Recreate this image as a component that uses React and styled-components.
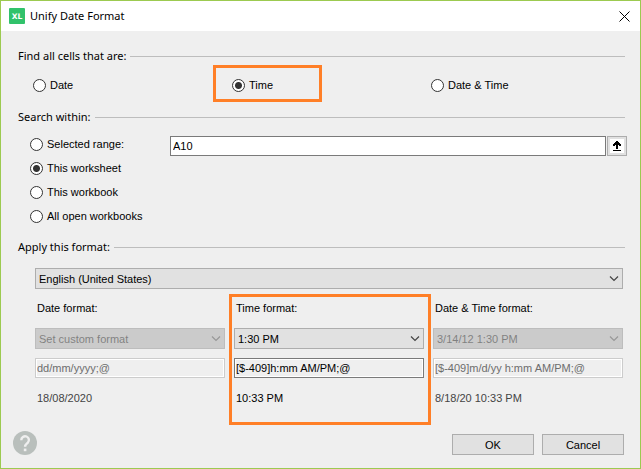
import React, { useState } from "react";
import styled, { createGlobalStyle, css } from "styled-components";

const theme = {
  frame: "#9cca50",
  face: "#efefef",
  line: "#bdbdbd",
  mark: "#ff7f27",
  sans: `"Liberation Sans", Arial, sans-serif`,
  heading: `"Noto Sans", "Open Sans", sans-serif`,
};

const GlobalStyle = createGlobalStyle`
  *, *::before, *::after {
    box-sizing: border-box;
  }
  body {
    margin: 0;
    font: 11px/16px ${theme.sans};
    color: #000;
  }
  button, input, select {
    font: inherit;
    color: inherit;
    margin: 0;
  }
`;

const Dialog = styled.form`
  display: flex;
  flex-direction: column;
  min-height: 100vh;
  border: 1px solid ${theme.frame};
  background: ${theme.face};
`;

const TitleBar = styled.header`
  display: flex;
  align-items: center;
  gap: 5px;
  height: 30px;
  padding: 0 8px;
  background: #fff;
`;

const Title = styled.h1`
  flex: 1;
  margin: 0;
  font: 11px/16px ${theme.heading};
`;

const CloseButton = styled.button`
  display: flex;
  padding: 2px;
  border: 0;
  background: none;
`;

const Content = styled.main`
  flex: 1;
  display: flex;
  flex-direction: column;
  padding-top: 17px;
`;

const GroupTitle = styled.h2`
  display: flex;
  align-items: center;
  gap: 4px;
  margin: 0 15px 0 17px;
  font: 11px/16px ${theme.heading};

  &::after {
    content: "";
    flex: 1;
    height: 1px;
    background: ${theme.line};
  }
`;

const Columns = styled.div`
  display: grid;
  grid-template-columns: repeat(3, minmax(0, 1fr));
  gap: 9px;
`;

const KindGroup = styled.section`
  margin-bottom: 14px;

  ${Columns} {
    padding: 11px 19px 0 32px;
  }
`;

const RadioLabel = styled.label`
  position: relative;
  display: flex;
  align-items: center;
  gap: 4px;
  height: ${({ $tall }) => ($tall ? "24px" : "20px")};

  ${({ $marked }) =>
    $marked &&
    css`
      &::after {
        content: "";
        position: absolute;
        left: -19px;
        top: -10px;
        width: 109px;
        height: 37px;
        border: 3px solid ${theme.mark};
        pointer-events: none;
      }
    `}
`;

const RadioInput = styled.input`
  appearance: none;
  width: 13px;
  height: 13px;
  border: 1px solid #333;
  border-radius: 50%;
  background: #fff;

  &:checked {
    background: radial-gradient(circle, #333 3px, #fff 4px);
  }
`;

const ScopeRow = styled.div`
  display: grid;
  grid-template-columns: 140px minmax(0, 1fr);
  padding: 7px 13px 11px 29px;
`;

const RangePicker = styled.div`
  display: flex;
  gap: 1px;
  padding-top: 4px;
`;

const RangeInput = styled.input`
  flex: 1;
  min-width: 0;
  height: 20px;
  padding: 0 2px;
  border: 1px solid #7a7a7a;
  background: #fff;
`;

const RangeButton = styled.button`
  display: flex;
  width: 20px;
  height: 20px;
  padding: 0;
  border: 1px solid #adadad;
  background: #fff;
  box-shadow: inset 0 0 0 2px #e1e1e1;
`;

const FormatArea = styled.div`
  display: flex;
  flex-direction: column;
  gap: 11px;
  padding: 13px 17px 0 34px;
`;

const SelectBox = styled.div`
  position: relative;
  opacity: ${({ $off }) => ($off ? 0.5 : 1)};

  svg {
    position: absolute;
    right: 4px;
    top: 7px;
    pointer-events: none;
  }
`;

const SelectInput = styled.select`
  display: block;
  appearance: none;
  width: 100%;
  height: 21px;
  padding: 0 20px 0 3px;
  border: 1px solid #adadad;
  border-radius: 0;
  background: #e1e1e1;

  &:disabled {
    border-color: #8d8d8d;
    background: #a9a9a9;
    color: #111;
    opacity: 1;
  }
`;

const FormatColumn = styled.div`
  position: relative;

  ${({ $marked }) =>
    $marked &&
    css`
      &::after {
        content: "";
        position: absolute;
        inset: -6px -7px -19px -5px;
        border: 3px solid ${theme.mark};
        pointer-events: none;
      }
    `}
`;

const FormatLabel = styled.label`
  display: block;
  padding: 0 2px 12px;
`;

const CodeInput = styled.input`
  display: block;
  width: 100%;
  height: 20px;
  margin: 9px 0 12px;
  padding: 0 1px;
  border: 1px solid #7a7a7a;
  background: ${theme.face};
  box-shadow: inset 0 0 0 1px #fff;

  &:disabled {
    border-color: #ccc;
    color: #6d6d6d;
  }
`;

const Sample = styled.output`
  display: block;
  padding: 0 2px;
  color: ${({ $off }) => ($off ? "#444" : "#000")};
`;

const Footer = styled.footer`
  display: flex;
  align-items: flex-end;
  gap: 8px;
  padding: 0 16px 13px 12px;
`;

const HelpButton = styled.button`
  display: flex;
  margin-right: auto;
  padding: 0;
  border: 0;
  background: none;
`;

const ActionButton = styled.button`
  width: 82px;
  height: 21px;
  padding: 0;
  border: 1px solid #adadad;
  background: #e1e1e1;
`;

const Logo = () => (
  <svg width="16" height="16" viewBox="0 0 16 16" aria-hidden="true">
    <rect width="16" height="16" rx="1" fill="#31c26b" />
    <text
      x="8"
      y="10.5"
      textAnchor="middle"
      fill="#fff"
      fontFamily="DejaVu Sans"
      fontSize="7.5"
      fontWeight="700"
    >
      XL
    </text>
  </svg>
);

const Chevron = () => (
  <svg width="10" height="7" viewBox="0 0 10 7" aria-hidden="true">
    <path d="M1 1.5l4 4 4-4" fill="none" stroke="#444" strokeWidth="1.2" />
  </svg>
);

const Radio = ({ label, tall, marked, ...rest }) => (
  <RadioLabel $tall={tall} $marked={marked}>
    <RadioInput type="radio" {...rest} />
    {label}
  </RadioLabel>
);

const Select = ({ options, disabled, ...rest }) => (
  <SelectBox $off={disabled}>
    <SelectInput disabled={disabled} {...rest}>
      {options.map((option) => (
        <option key={option}>{option}</option>
      ))}
    </SelectInput>
    <Chevron />
  </SelectBox>
);

const kinds = ["Date", "Time", "Date & Time"];

const scopes = [
  "Selected range:",
  "This worksheet",
  "This workbook",
  "All open workbooks",
];

const formats = [
  {
    kind: "Date",
    preset: "Set custom format",
    code: "dd/mm/yyyy;@",
    sample: "18/08/2020",
  },
  {
    kind: "Time",
    preset: "1:30 PM",
    code: "[$-409]h:mm AM/PM;@",
    sample: "10:33 PM",
  },
  {
    kind: "Date & Time",
    preset: "3/14/12 1:30 PM",
    code: "[$-409]m/d/yy h:mm AM/PM;@",
    sample: "8/18/20 10:33 PM",
  },
];

const App = () => {
  const [kind, setKind] = useState("Time");
  const [scope, setScope] = useState("This worksheet");
  const [range, setRange] = useState("A10");

  return (
    <>
      <GlobalStyle />
      <Dialog onSubmit={(e) => e.preventDefault()}>
        <TitleBar>
          <Logo />
          <Title>Unify Date Format</Title>
          <CloseButton type="button" aria-label="Close">
            <svg width="11" height="11" viewBox="0 0 11 11">
              <path d="M.5 .5l10 10M10.5 .5l-10 10" stroke="#000" />
            </svg>
          </CloseButton>
        </TitleBar>
        <Content>
          <KindGroup role="radiogroup" aria-labelledby="kind-title">
            <GroupTitle id="kind-title">Find all cells that are:</GroupTitle>
            <Columns>
              {kinds.map((item) => (
                <Radio
                  key={item}
                  name="kind"
                  label={item}
                  checked={kind === item}
                  marked={item === "Time"}
                  onChange={() => setKind(item)}
                />
              ))}
            </Columns>
          </KindGroup>

          <section role="radiogroup" aria-labelledby="scope-title">
            <GroupTitle id="scope-title">Search within:</GroupTitle>
            <ScopeRow>
              <div>
                {scopes.map((item) => (
                  <Radio
                    key={item}
                    tall
                    name="scope"
                    label={item}
                    checked={scope === item}
                    onChange={() => setScope(item)}
                  />
                ))}
              </div>
              <RangePicker>
                <RangeInput
                  aria-label="Selected range"
                  value={range}
                  onChange={(e) => setRange(e.target.value)}
                />
                <RangeButton type="button" aria-label="Pick range">
                  <svg width="18" height="18" shapeRendering="crispEdges">
                    <path d="M9 4h1v1h1v1h1v1h1v2h-2v-1h-1v4h-2v-4h-1v1h-2v-2h1v-1h1v-1h1v-1zM5 13h8v1h-8z" />
                  </svg>
                </RangeButton>
              </RangePicker>
            </ScopeRow>
          </section>

          <section>
            <GroupTitle>Apply this format:</GroupTitle>
            <FormatArea>
              <Select
                aria-label="Language"
                options={["English (United States)"]}
              />
              <Columns>
                {formats.map((item, i) => {
                  const off = item.kind !== kind;
                  return (
                    <FormatColumn key={item.kind} $marked={item.kind === "Time"}>
                      <FormatLabel htmlFor={`preset-${i}`}>
                        {item.kind} format:
                      </FormatLabel>
                      <Select
                        id={`preset-${i}`}
                        options={[item.preset]}
                        disabled={off}
                      />
                      <CodeInput
                        aria-label={`${item.kind} format code`}
                        defaultValue={item.code}
                        readOnly
                        disabled={off}
                      />
                      <Sample $off={off}>{item.sample}</Sample>
                    </FormatColumn>
                  );
                })}
              </Columns>
            </FormatArea>
          </section>
        </Content>
        <Footer>
          <HelpButton type="button" aria-label="Help">
            <svg width="24" height="24" viewBox="0 0 24 24">
              <circle cx="12" cy="12" r="12" fill="#b9bfbc" />
              <path
                d="M8.3 9.2a3.8 3.8 0 1 1 6.4 2.6c-1.4 1.3-2.6 1.9-2.6 4"
                fill="none"
                stroke="#efefef"
                strokeWidth="2.4"
              />
              <rect x="10.8" y="17.6" width="2.6" height="2.6" fill="#efefef" />
            </svg>
          </HelpButton>
          <ActionButton type="submit">OK</ActionButton>
          <ActionButton type="button">Cancel</ActionButton>
        </Footer>
      </Dialog>
    </>
  );
};

export default App;
